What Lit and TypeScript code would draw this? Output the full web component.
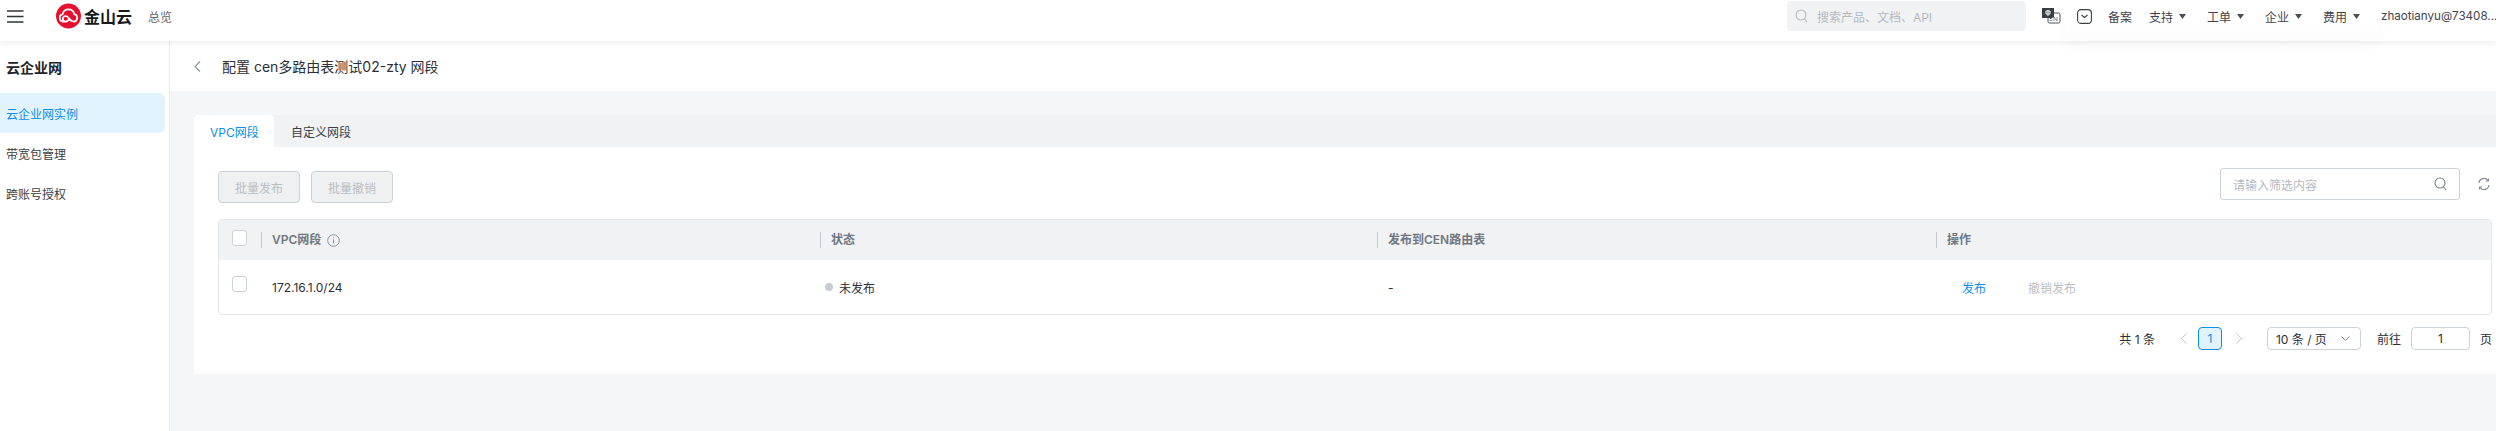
import { LitElement, html, css } from "lit";
import { customElement } from "lit/decorators.js";

const caret = html`<svg class="caret" width="7" height="5" viewBox="0 0 7 5"><path d="M0 0h7L3.5 5z" fill="#4a4f55"/></svg>`;

@customElement("app-root")
export class AppRoot extends LitElement {
  static styles = css`
    :host { display: block; width: 2496px; height: 431px; overflow: hidden; background: #fff; color: #2b3038;
      font-family: Inter, "Noto Sans CJK SC", sans-serif; font-size: 12px; }
    * { box-sizing: border-box; }
    .header { height: 41px; display: flex; align-items: center; background: #fff; box-shadow: 0 1px 6px rgba(30,40,60,.1); position: relative; z-index: 2; }
    .glow { position: absolute; left: 2066px; top: 0; width: 312px; height: 41px; pointer-events: none;
      background: linear-gradient(rgba(0,0,0,0) 65%, rgba(0,0,0,.012)); box-shadow: 0 5px 16px rgba(0,0,0,.022); clip-path: inset(24px -30px -40px -30px); }
    .burger { margin-left: 7px; width: 17px; height: 13px; flex: none; margin-top: -9px; }
    .logo { margin-left: 32px; display: flex; align-items: center; gap: 3px; width: 76px; flex: none; margin-top: -9px; }
    .logo b { font-size: 16px; font-weight: 700; color: #17191c; white-space: nowrap; }
    .overview { margin-left: 16px; color: #5d6570; font-size: 12px; margin-top: -9px; }
    .spacer { flex: 1; }
    .search { width: 239px; height: 30px; margin-top: -9px; margin-right: 15px; background: #f1f2f4; border-radius: 4px; display: flex; align-items: center; gap: 9px; padding-left: 8px; color: #b5bac1; flex: none; }
    .hgroup { display: flex; align-items: center; margin-top: -9px; flex: none; }
    .hicons { display: flex; align-items: center; gap: 16px; margin-right: 16px; }
    .hnav { display: flex; align-items: center; gap: 6px; color: #3f444b; margin-right: 21px; white-space: nowrap; }
    .hnav.plain { margin-right: 17px; }
    .user { width: 115px; white-space: nowrap; color: #3f444b; font-size: 11.6px; }
    .body { display: flex; height: 390px; }
    .side { width: 170px; flex: none; border-right: 1px solid #e9ebee; padding-top: 16px; background: #fff; }
    .side h2 { margin: 0 0 16px 6px; font-size: 14px; line-height: 22px; font-weight: 700; color: #20242a; height: 20px; }
    .item { height: 40px; width: 165px; display: flex; align-items: center; padding-left: 6px; font-size: 12px; color: #3a3f45; border-radius: 0 6px 6px 0; }
    .item.on { background: #e0f3fe; color: #0b8ee8; }
    .main { flex: 1; min-width: 0; background: #f5f6f8; }
    .title { height: 50px; background: #fff; display: flex; align-items: center; padding-left: 24px; font-size: 14px; color: #2b3038; gap: 21px; }
    .content { padding: 24px 0 0 24px; }
    .tabs { display: flex; height: 32px; background: #f1f2f4; }
    .tab { display: flex; align-items: center; height: 32px; color: #3a3f45; border-radius: 4px 4px 0 0; padding: 0 17px; }
    .tab.on { background: #fff; color: #0b8ee8; width: 80px; padding: 0 16px; white-space: nowrap; }
    .card { background: #fff; padding: 24px 4px 24px 24px; }
    .toolbar { display: flex; justify-content: space-between; align-items: flex-start; margin-bottom: 16px; height: 32px; }
    .btns { display: flex; gap: 11px; }
    .btn { width: 82px; height: 32px; display: flex; align-items: center; justify-content: center; background: #eef0f2; border: 1px solid #cdd2d8; border-radius: 4px; color: #b9bec4; }
    .tools { display: flex; align-items: center; gap: 18px; margin-top: -3px; padding-right: 2px; }
    .filter { width: 240px; height: 32px; border: 1px solid #cdd2d8; border-radius: 3px; display: flex; align-items: center; justify-content: space-between; padding: 0 12px; color: #b5bac1; }
    .table { border: 1px solid #e3e5e8; border-radius: 4px; overflow: hidden; }
    .row { display: grid; grid-template-columns: 42px 559px 557px 559px 1fr; align-items: center; }
    .row.head { height: 40px; background: #f1f2f4; color: #6f7882; font-weight: 600; }
    .row.data { height: 54px; color: #2b3038; }
    .chk { width: 15px; height: 16px; border: 1px solid #cdd2d8; border-radius: 3px; background: #fff; margin: 0 0 4px 13px; }
    .row.data .chk { margin-bottom: 6px; }
    .th { border-left: 1px solid #c4c8cd; height: 16px; padding-left: 10px; display: flex; align-items: center; gap: 6px; line-height: 16px; }
    .td { padding-left: 11px; display: flex; align-items: center; }
    .td.status { padding-left: 5px; }
    .dot { width: 8px; height: 8px; border-radius: 50%; background: #c8cdd3; margin-right: 6px; }
    .ops { padding-left: 26px; display: flex; gap: 42px; }
    .link { color: #0b8ee8; }
    .muted { color: #b9bec4; }
    .pager { display: flex; align-items: center; justify-content: flex-end; margin-top: 12px; height: 23px; color: #2b3038; }
    .count { margin-right: 26px; }
    .pnum { width: 24px; height: 23px; border: 1px solid #0b8ee8; border-radius: 4px; background: #e0f3fe; color: #0b8ee8; display: flex; align-items: center; justify-content: center; margin: 0 14px 0 11px; }
    .select { width: 94px; height: 23px; border: 1px solid #cdd2d8; border-radius: 4px; display: flex; align-items: center; justify-content: space-between; padding: 0 10px 0 8px; margin: 0 16px 0 25px; }
    .goto { width: 59px; height: 23px; border: 1px solid #cdd2d8; border-radius: 4px; display: flex; align-items: center; justify-content: center; margin: 0 10px; }
  `;

  render() {
    return html`
      <div class="header">
        <svg class="burger" viewBox="0 0 17 13"><path d="M0 1h16.500M0 6.500h16.500M0 12h16.500" stroke="#30363d" stroke-width="1.300" fill="none"/></svg>
        <div class="logo">
          <svg width="26" height="26" viewBox="0 0 26 26">
            <circle cx="13" cy="13" r="13" fill="#e60f2d"/>
            <path d="M8.500 18.800H8a3.900 3.900 0 0 1-1-7.700 6.100 6.100 0 0 1 12 0 3.900 3.900 0 0 1-.6 7.700c-2.500 0-3.600-1.700-5.200-3.800-1-1.300-2-2-3.200-2a2.900 2.900 0 0 0 0 5.800c2 0 3.200-1.700 4-3M13.700 16.500c.8 1 1.600 1.500 3 1.500" fill="none" stroke="#fff" stroke-width="1.800" stroke-linecap="round" stroke-linejoin="round"/>
          </svg>
          <b>金山云</b>
        </div>
        <span class="overview">总览</span>
        <span class="spacer"></span>
        <div class="search">
          <svg width="13" height="14" viewBox="0 0 13 14"><circle cx="6" cy="6" r="5" fill="none" stroke="#b5bac1" stroke-width="1.100"/><path d="M9.500 10l2.500 3" stroke="#b5bac1" stroke-width="1.100"/></svg>
          搜索产品、文档、API
        </div>
        <div class="hgroup">
          <div class="hicons">
            <svg width="20" height="16" viewBox="0 0 20 16"><rect x="7" y="5" width="12" height="10" rx="1.500" fill="#fff" stroke="#4b5158"/><path d="M8.500 8.500h3M8.500 10.500h2M8.500 12.500h3M13 13V9l3 4V9" fill="none" stroke="#6b7178" stroke-width=".7"/><path d="M1 0h12v9l-4 2v-1H1z" fill="#3a3f45"/><path d="M5 3h4v3H5zM7 2v6" fill="none" stroke="#fff"/></svg>
            <svg width="15" height="15" viewBox="0 0 15 15"><rect x=".6" y=".6" width="13.800" height="13.800" rx="3.500" fill="none" stroke="#3a3f45" stroke-width="1.100"/><path d="M4.500 6l3 2.500 3-2.500" fill="none" stroke="#3a3f45" stroke-width="1.100"/></svg>
          </div>
          <span class="hnav plain">备案</span>
          <span class="hnav">支持 ${caret}</span>
          <span class="hnav">工单 ${caret}</span>
          <span class="hnav">企业 ${caret}</span>
          <span class="hnav">费用 ${caret}</span>
          <span class="user">zhaotianyu@73408...</span>
        </div>
        <div class="glow"></div>
      </div>
      <div class="body">
        <div class="side">
          <h2>云企业网</h2>
          <div class="item on">云企业网实例</div>
          <div class="item">带宽包管理</div>
          <div class="item">跨账号授权</div>
        </div>
        <div class="main">
          <div class="title">
            <svg width="7" height="11" viewBox="0 0 7 11"><path d="M6 .5L1 5.500l5 5" fill="none" stroke="#8a9097" stroke-width="1.100"/></svg>
            <span>配置 cen多路由表测试02-zty 网段</span>
          </div>
          <div class="content">
            <div class="tabs">
              <div class="tab on">VPC网段</div>
              <div class="tab">自定义网段</div>
            </div>
            <div class="card">
              <div class="toolbar">
                <div class="btns"><div class="btn">批量发布</div><div class="btn">批量撤销</div></div>
                <div class="tools">
                  <div class="filter">请输入筛选内容
                    <svg width="13" height="14" viewBox="0 0 13 14"><circle cx="6" cy="6" r="5" fill="none" stroke="#7d848c" stroke-width="1.100"/><path d="M9.500 10l2.500 3" stroke="#7d848c" stroke-width="1.100"/></svg>
                  </div>
                  <svg width="12" height="12" viewBox="0 0 12 12"><path d="M1 5a5 5 0 0 1 9-2.500M11 7a5 5 0 0 1-9 2.500" fill="none" stroke="#7d848c" stroke-width="1.100"/><path d="M10.500 .5v2.500H8M1.500 11.500V9H4" fill="none" stroke="#7d848c" stroke-width="1"/></svg>
                </div>
              </div>
              <div class="table">
                <div class="row head">
                  <div class="chk"></div>
                  <div class="th">VPC网段
                    <svg width="13" height="13" viewBox="0 0 13 13"><circle cx="6.500" cy="6.500" r="5.800" fill="none" stroke="#8a9097"/><path d="M6.500 5.500v4M6.500 3.300v1" stroke="#8a9097"/></svg>
                  </div>
                  <div class="th">状态</div>
                  <div class="th">发布到CEN路由表</div>
                  <div class="th">操作</div>
                </div>
                <div class="row data">
                  <div class="chk"></div>
                  <div class="td">172.16.1.0/24</div>
                  <div class="td status"><span class="dot"></span>未发布</div>
                  <div class="td">-</div>
                  <div class="td ops"><span class="link">发布</span><span class="muted">撤销发布</span></div>
                </div>
              </div>
              <div class="pager">
                <span class="count">共 1 条</span>
                <svg width="6" height="11" viewBox="0 0 6 11"><path d="M5.500 .5l-5 5 5 5" fill="none" stroke="#c4c8cd"/></svg>
                <div class="pnum">1</div>
                <svg width="6" height="11" viewBox="0 0 6 11"><path d="M.5 .5l5 5-5 5" fill="none" stroke="#c4c8cd"/></svg>
                <div class="select">10 条 / 页
                  <svg width="9" height="6" viewBox="0 0 9 6"><path d="M.5 .5l4 4 4-4" fill="none" stroke="#7d848c"/></svg>
                </div>
                <span>前往</span>
                <div class="goto">1</div>
                <span>页</span>
              </div>
            </div>
          </div>
        </div>
      </div>
    `;
  }
}
